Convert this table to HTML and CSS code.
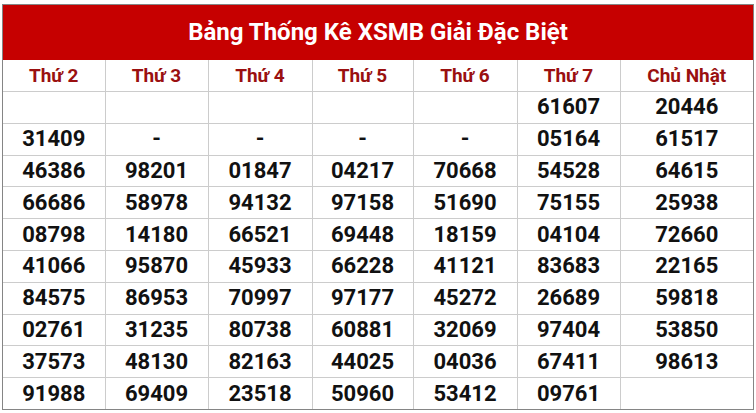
FILE: index.html
```html
<!DOCTYPE html>
<html lang="vi">
<head>
<meta charset="utf-8">
<title>Bảng Thống Kê XSMB Giải Đặc Biệt</title>
<link rel="stylesheet" href="styles.css">
</head>
<body>
<div class="board">
  <div class="board-title">Bảng Thống Kê XSMB Giải Đặc Biệt</div>
  <table class="stats">
    <colgroup>
      <col class="c1"><col class="c2"><col class="c3"><col class="c4"><col class="c5"><col class="c6"><col class="c7">
    </colgroup>
    <thead>
      <tr><th>Thứ 2</th><th>Thứ 3</th><th>Thứ 4</th><th>Thứ 5</th><th>Thứ 6</th><th>Thứ 7</th><th>Chủ Nhật</th></tr>
    </thead>
    <tbody>
      <tr><td></td><td></td><td></td><td></td><td></td><td>61607</td><td>20446</td></tr>
      <tr><td>31409</td><td>-</td><td>-</td><td>-</td><td>-</td><td>05164</td><td>61517</td></tr>
      <tr><td>46386</td><td>98201</td><td>01847</td><td>04217</td><td>70668</td><td>54528</td><td>64615</td></tr>
      <tr><td>66686</td><td>58978</td><td>94132</td><td>97158</td><td>51690</td><td>75155</td><td>25938</td></tr>
      <tr><td>08798</td><td>14180</td><td>66521</td><td>69448</td><td>18159</td><td>04104</td><td>72660</td></tr>
      <tr><td>41066</td><td>95870</td><td>45933</td><td>66228</td><td>41121</td><td>83683</td><td>22165</td></tr>
      <tr><td>84575</td><td>86953</td><td>70997</td><td>97177</td><td>45272</td><td>26689</td><td>59818</td></tr>
      <tr><td>02761</td><td>31235</td><td>80738</td><td>60881</td><td>32069</td><td>97404</td><td>53850</td></tr>
      <tr><td>37573</td><td>48130</td><td>82163</td><td>44025</td><td>04036</td><td>67411</td><td>98613</td></tr>
      <tr><td>91988</td><td>69409</td><td>23518</td><td>50960</td><td>53412</td><td>09761</td><td></td></tr>
    </tbody>
  </table>
</div>
</body>
</html>
```

FILE: styles.css
```css
html, body {
  margin: 0;
  padding: 0;
  background: #ffffff;
}

body {
  padding: 4px 2px 0 2px;
  font-family: Roboto, "Liberation Sans", Arial, sans-serif;
}

.board {
  width: 752px;
  box-sizing: border-box;
  border: 1px solid #858585;
}

.board-title {
  height: 55px;
  background: #c60000;
  color: #ffffff;
  font-size: 24px;
  font-weight: 700;
  display: flex;
  align-items: center;
  justify-content: center;
  padding-bottom: 2px;
  box-sizing: border-box;
}

.stats {
  width: 100%;
  border-collapse: collapse;
  table-layout: fixed;
}

.c1 { width: 102px; }
.c2 { width: 103px; }
.c3 { width: 104px; }
.c4 { width: 101px; }
.c5 { width: 104px; }
.c6 { width: 103px; }
.c7 { width: auto; }

.stats th,
.stats td {
  border: 1px solid #cccccc;
  text-align: center;
  padding: 0;
  line-height: 1;
}

.stats tr > :first-child { border-left: none; }
.stats tr > :last-child { border-right: none; }
.stats thead th { border-top: none; }
.stats tbody tr:last-child td { border-bottom: none; }

.stats th {
  height: 31px;
  color: #9a1010;
  font-size: 19px;
  font-weight: 700;
}

.stats td {
  height: 30.8px;
  color: #111111;
  font-size: 22px;
  font-weight: 700;
}
```
